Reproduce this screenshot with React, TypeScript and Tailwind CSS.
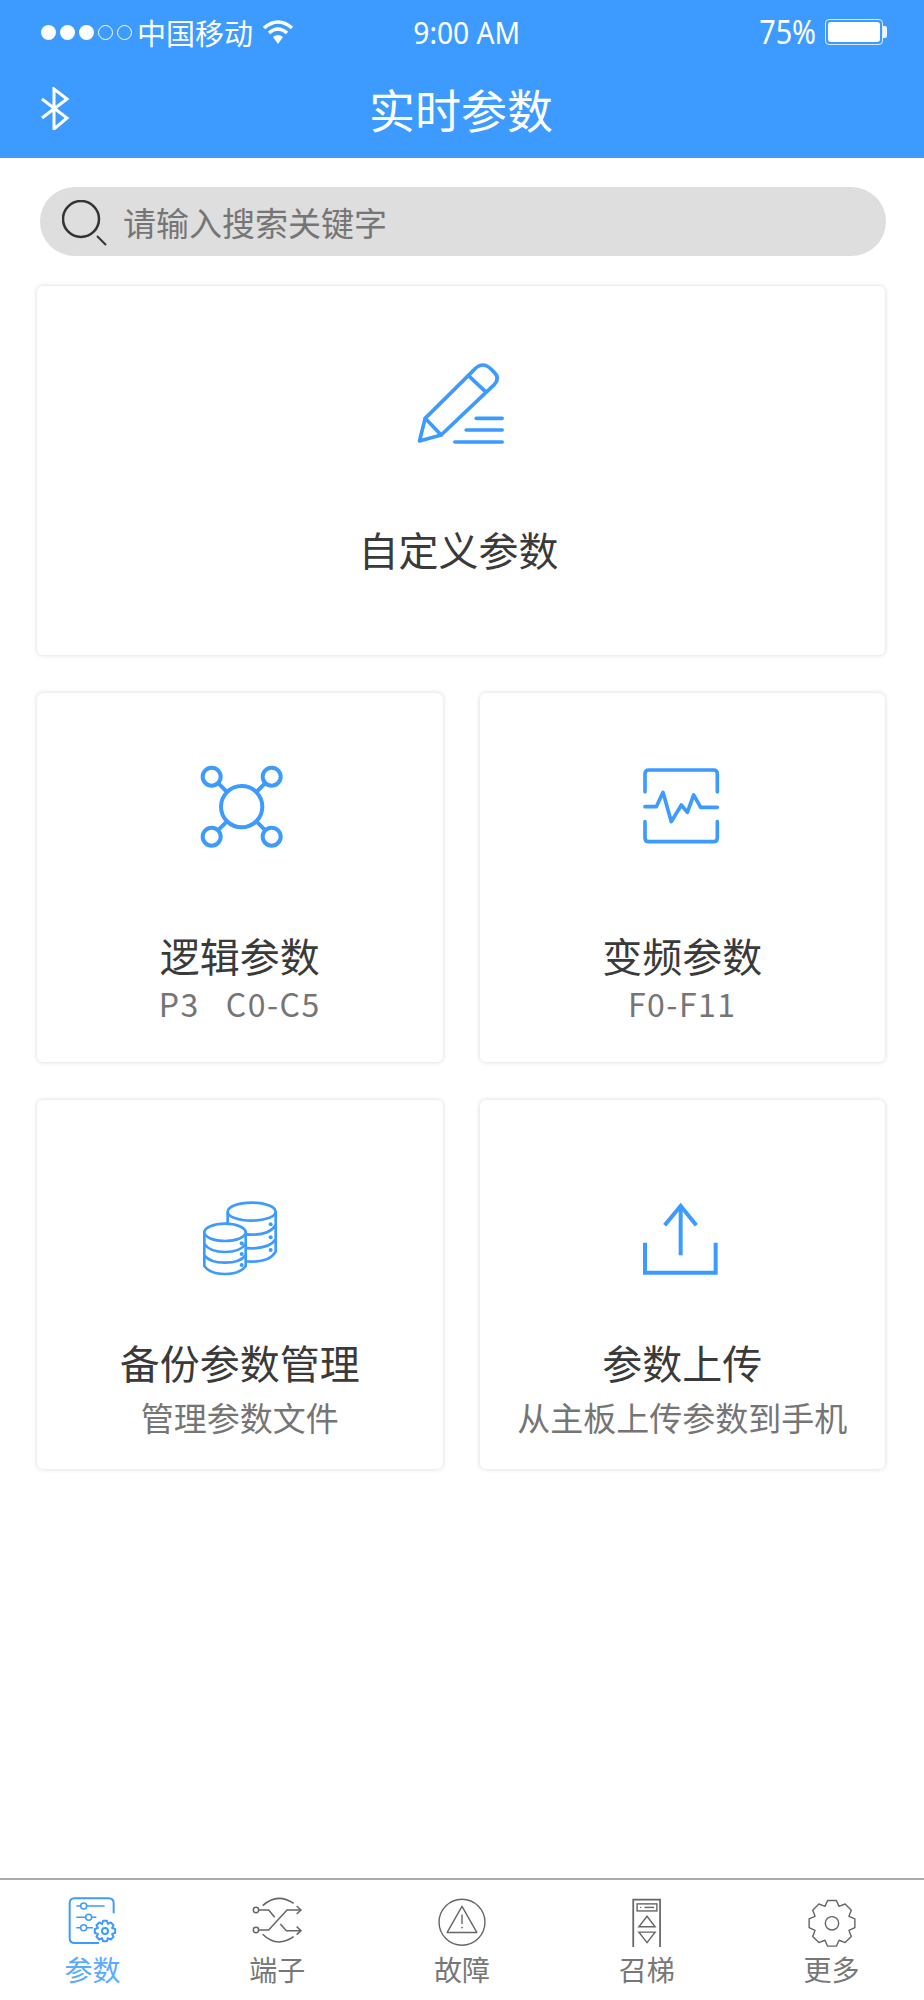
const gearPath = (cx: number, cy: number, outer: number, inner: number, teeth: number) => {
  const step = (Math.PI * 2) / teeth;
  const pts: string[] = [];
  for (let i = 0; i < teeth; i++) {
    const a = i * step - Math.PI / 2;
    const offs = [
      [-0.5, inner],
      [-0.24, outer],
      [0.24, outer],
      [0.5, inner],
    ];
    offs.forEach(([o, r]) => {
      const t = a + o * step;
      pts.push(`${(cx + Math.cos(t) * r).toFixed(1)} ${(cy + Math.sin(t) * r).toFixed(1)}`);
    });
  }
  return `M${pts.join(" L")} Z`;
};

function PencilIcon() {
  return (
    <svg width="160" height="120" viewBox="4.5 0 480 360" fill="none" stroke="#3d9bff" strokeWidth="11" strokeLinejoin="round" strokeLinecap="round">
      <path d="M120 303 L137 235 L285 88 Q310 62 335 88 L345 98 Q362 115 345 133 L185 285 Z" />
      <path d="M137 235 L185 285 M270 110 L318 155" />
      <path d="M290 235 H368 M260 270 H368 M226 306 H368" />
    </svg>
  );
}

function NetworkIcon() {
  return (
    <svg width="130" height="110" viewBox="-15 0 390 330" fill="none" stroke="#3d9bff" strokeWidth="12">
      <circle cx="185" cy="170" r="62" />
      <circle cx="95" cy="80" r="27" />
      <circle cx="275" cy="80" r="27" />
      <circle cx="95" cy="260" r="27" />
      <circle cx="275" cy="260" r="27" />
      <path d="M116 101 L141 126 M254 101 L229 126 M116 239 L141 214 M254 239 L229 214" />
    </svg>
  );
}

function WaveIcon() {
  return (
    <svg width="130" height="110" viewBox="-6 0 390 330" fill="none" stroke="#3d9bff" strokeWidth="11" strokeLinecap="round" strokeLinejoin="round">
      <path d="M78 125 V72 Q78 60 90 60 H283 Q295 60 295 72 V125" />
      <path d="M78 215 V263 Q78 275 90 275 H283 Q295 275 295 263 V215" />
      <path d="M78 170 H112 L132 127 L157 215 L187 165 L205 187 L224 135 L245 172 H295" />
    </svg>
  );
}

function DatabaseIcon() {
  return (
    <svg className="mt-[23px] mb-[-23px]" width="130" height="110" viewBox="-15 0 390 330" fill="none" stroke="#3d9bff" strokeWidth="8">
      <ellipse cx="215" cy="95" rx="72" ry="27" fill="#fff" />
      <path d="M143 95 V215 Q160 245 215 245 Q270 245 287 215 V95" />
      <path d="M143 135 Q160 164 215 164 Q270 164 287 135 M143 178 Q160 205 215 205 Q270 205 287 178" />
      <g fill="#3d9bff" stroke="none">
        <circle cx="272" cy="133" r="6" />
        <circle cx="272" cy="172" r="6" />
        <circle cx="272" cy="210" r="6" />
      </g>
      <path d="M73 157 V258 Q90 282 135 282 Q180 282 197 258 V157 Z" fill="#fff" />
      <ellipse cx="135" cy="157" rx="62" ry="26" fill="#fff" />
      <path d="M73 192 Q90 216 135 216 Q180 216 197 192 M73 226 Q90 248 135 248 Q180 248 197 226" />
      <g fill="#3d9bff" stroke="none">
        <circle cx="185" cy="190" r="6" />
        <circle cx="185" cy="222" r="6" />
        <circle cx="185" cy="255" r="6" />
      </g>
    </svg>
  );
}

function UploadIcon() {
  return (
    <svg className="mt-[23px] mb-[-23px]" width="130" height="110" viewBox="-6 0 390 330" fill="none" stroke="#3d9bff" strokeWidth="12">
      <path d="M185 226 V78" />
      <path d="M137 136 L185 78 L232 136" />
      <path d="M78 188 V278 H290 V188" />
    </svg>
  );
}

function ParamTabIcon() {
  return (
    <svg width="54" height="52" viewBox="196 80 162 156" fill="none" stroke="#3d9bff" strokeWidth="6">
      <path d="M342 135 V105 Q342 90 327 90 H225 Q210 90 210 105 V208 Q210 224 225 224 H298" />
      <path d="M230 113 H315 M230 147 H290 M230 178 H280" strokeWidth="4.5" />
      <circle cx="252" cy="113" r="9" fill="#fff" strokeWidth="4.5" />
      <circle cx="267" cy="147" r="9" fill="#fff" strokeWidth="4.5" />
      <circle cx="252" cy="178" r="9" fill="#fff" strokeWidth="4.5" />
      <path d={gearPath(316, 188, 31, 23, 8)} fill="#fff" strokeLinejoin="round" />
      <circle cx="316" cy="188" r="9" />
    </svg>
  );
}

function PortTabIcon() {
  return (
    <svg width="54" height="52" viewBox="749 80 162 156" fill="none" stroke="#666" strokeWidth="4.5">
      <circle cx="767" cy="125" r="8" />
      <circle cx="767" cy="185" r="8" />
      <path d="M775 125 H805 L823 147 M840 167 L858 187 H900 M775 185 H805 L860 125 H900" />
      <path d="M889 113 L902 125 L889 137 M889 175 L902 187 L889 199" />
      <path d="M787 112 Q830 72 880 105 M787 198 Q830 240 880 205" />
    </svg>
  );
}

function FaultTabIcon() {
  return (
    <svg width="54" height="52" viewBox="183.5 75 153 147" fill="none" stroke="#666" strokeWidth="4" strokeLinejoin="round">
      <circle cx="260" cy="152" r="65" />
      <path d="M260 107 L302 181 H218 Z" />
      <path d="M260 130 V157" />
      <circle cx="260" cy="167" r="2.5" fill="#666" stroke="none" />
    </svg>
  );
}

function CallTabIcon() {
  return (
    <svg width="54" height="52" viewBox="708.5 75 153 147" fill="none" stroke="#666" strokeWidth="4">
      <rect x="746" y="88" width="76" height="138" strokeWidth="5" />
      <rect x="757" y="100" width="56" height="20" />
      <path d="M778 110 H805" />
      <circle cx="767" cy="110" r="2" fill="#666" stroke="none" />
      <path d="M785 135 L762 165 H808 Z M762 180 H808 L785 210 Z" />
    </svg>
  );
}

function MoreTabIcon() {
  return (
    <svg width="54" height="52" viewBox="1230.5 75 153 147" fill="none" stroke="#666" strokeWidth="4" strokeLinejoin="round">
      <path d={gearPath(1307, 155, 66, 52, 8)} />
      <circle cx="1307" cy="155" r="19" />
    </svg>
  );
}

const tabs = [
  { label: "参数", icon: <ParamTabIcon />, active: true },
  { label: "端子", icon: <PortTabIcon />, active: false },
  { label: "故障", icon: <FaultTabIcon />, active: false },
  { label: "召梯", icon: <CallTabIcon />, active: false },
  { label: "更多", icon: <MoreTabIcon />, active: false },
];

function Card({ icon, title, sub, subClass }: { icon: React.ReactNode; title: string; sub: string; subClass: string }) {
  return (
    <div className="h-[369px] rounded-md bg-white shadow-[0_0_5px_rgba(0,0,0,0.16)] pt-[57px] flex flex-col items-center">
      {icon}
      <div className="mt-[72px] h-[46px] text-[40px] leading-[46px] text-[#3a3a3a] whitespace-nowrap">{title}</div>
      <div className={`h-[32px] leading-[32px] text-[#757575] whitespace-pre ${subClass}`}>{sub}</div>
    </div>
  );
}

const latinSub = "mt-[9px] text-[32px] tracking-[1.5px]";
const cjkSub = "mt-[16px] text-[33px]";

export default function App() {
  return (
    <div className="min-h-[2000px] flex flex-col bg-white font-['Noto_Sans_CJK_SC','Noto_Sans',sans-serif]">
      <header className="h-[158px] bg-[#3d9bff] text-white">
        <div className="h-[64px] pl-[41px] pr-[37px] grid grid-cols-3 items-center">
          <div className="flex items-center">
            <div className="flex items-center gap-[4px] shrink-0">
              <span className="w-[15px] h-[15px] rounded-full bg-white" />
              <span className="w-[15px] h-[15px] rounded-full bg-white" />
              <span className="w-[15px] h-[15px] rounded-full bg-white" />
              <span className="w-[15px] h-[15px] rounded-full border border-white" />
              <span className="w-[15px] h-[15px] rounded-full border border-white" />
            </div>
            <span className="ml-[5px] text-[29px] leading-[34px] whitespace-nowrap">中国移动</span>
            <svg className="ml-[9px] shrink-0" width="32" height="26" viewBox="0 0 32 26" fill="none" stroke="#fff" strokeWidth="3.5">
              <path d="M2 9 Q16 -3 30 9 M7 14 Q16 6 25 14" />
              <path d="M11 18 Q16 14 21 18 L16 25 Z" fill="#fff" stroke="none" />
            </svg>
          </div>
          <div className="pl-[6px] text-center text-[31px] leading-[36px] font-['Noto_Sans',sans-serif] scale-x-[0.91] whitespace-nowrap">9:00 AM</div>
          <div className="flex items-center justify-end">
            <span className="text-[32px] leading-[36px] font-['Noto_Sans',sans-serif] scale-x-[0.9]">75%</span>
            <div className="ml-[6px] w-[58px] h-[26px] rounded-[4px] border border-white/80 p-[2px]">
              <div className="h-full rounded-[3px] bg-white" />
            </div>
            <div className="w-[4px] h-[12px] rounded-r-[2px] bg-white/90" />
          </div>
        </div>
        <div className="h-[94px] px-[40px] pb-[6px] grid grid-cols-[1fr_auto_1fr] items-center">
          <svg width="30" height="43" viewBox="0 0 30 43" fill="none" stroke="#fff" strokeWidth="3">
            <path d="M2 12 L27 31 L14 42 V2 L27 12 L2 31" />
          </svg>
          <h1 className="text-[46px] leading-[52px] font-normal pr-[2px]">实时参数</h1>
          <div />
        </div>
      </header>

      <main className="flex-1 pl-[37px] pr-[38px]">
        <div className="mt-[29px] ml-[3px] h-[69px] rounded-full bg-[#dedede] flex items-center pl-[22px]">
          <svg width="46" height="46" viewBox="0 0 46 46" fill="none" stroke="#333" className="mt-[2px]">
            <circle cx="19" cy="19" r="18" strokeWidth="2.5" />
            <path d="M35 36 L44 45" strokeWidth="2" />
          </svg>
          <span className="ml-[15px] text-[33px] leading-[38px] text-[#757575]">请输入搜索关键字</span>
        </div>

        <div className="mt-[30px] mr-[1px] h-[369px] rounded-md bg-white shadow-[0_0_5px_rgba(0,0,0,0.16)] pt-[54px] flex flex-col items-center">
          <PencilIcon />
          <div className="mt-[64px] pr-[5px] text-[40px] leading-[50px] text-[#3a3a3a]">自定义参数</div>
        </div>

        <div className="mt-[38px] mr-[1px] grid grid-cols-2 gap-x-[37px] gap-y-[38px]">
          <Card icon={<NetworkIcon />} title="逻辑参数" sub="P3   C0-C5" subClass={latinSub} />
          <Card icon={<WaveIcon />} title="变频参数" sub="F0-F11" subClass={latinSub} />
          <Card icon={<DatabaseIcon />} title="备份参数管理" sub="管理参数文件" subClass={cjkSub} />
          <Card icon={<UploadIcon />} title="参数上传" sub="从主板上传参数到手机" subClass={cjkSub} />
        </div>
      </main>

      <nav className="h-[122px] border-t-2 border-[#aaa] grid grid-cols-5">
        {tabs.map((tab) => (
          <div key={tab.label} className="flex flex-col items-center pt-[15px]">
            {tab.icon}
            <span className={`mt-[4px] text-[28px] leading-[36px] ${tab.active ? "text-[#5aabff]" : "text-[#777]"}`}>
              {tab.label}
            </span>
          </div>
        ))}
      </nav>
    </div>
  );
}
